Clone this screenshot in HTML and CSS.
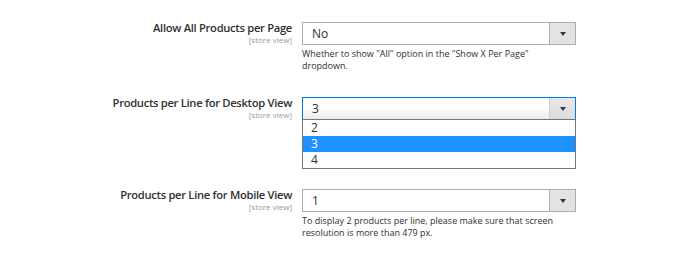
FILE: index.html
```html
<!DOCTYPE html>
<html>
<head>
<meta charset="utf-8">
<link rel="stylesheet" href="styles.css">
</head>
<body>
<div class="form">
  <div class="row">
    <div class="label">
      <div class="label-text">Allow All Products per Page</div>
      <div class="scope">[store view]</div>
    </div>
    <div class="control">
      <div class="select">
        <span class="value">No</span>
        <span class="btn"><span class="arrow"></span></span>
      </div>
      <div class="note">Whether to show "All" option in the "Show X Per Page" dropdown.</div>
    </div>
  </div>

  <div class="row row-open">
    <div class="label">
      <div class="label-text">Products per Line for Desktop View</div>
      <div class="scope">[store view]</div>
    </div>
    <div class="control">
      <div class="select select-focus">
        <span class="value">3</span>
        <span class="btn"><span class="arrow"></span></span>
      </div>
      <ul class="options">
        <li>2</li>
        <li class="selected">3</li>
        <li>4</li>
      </ul>
    </div>
  </div>

  <div class="row">
    <div class="label">
      <div class="label-text">Products per Line for Mobile View</div>
      <div class="scope">[store view]</div>
    </div>
    <div class="control">
      <div class="select">
        <span class="value">1</span>
        <span class="btn"><span class="arrow"></span></span>
      </div>
      <div class="note">To display 2 products per line, please make sure that screen resolution is more than 479 px.</div>
    </div>
  </div>
</div>
</body>
</html>
```

FILE: styles.css
```css
html, body {
  margin: 0;
  padding: 0;
  background: #ffffff;
}
body {
  font-family: "Open Sans", "Liberation Sans", sans-serif;
  color: #303030;
}
.form {
  padding-top: 22px;
}
.row {
  display: flex;
  gap: 10px;
  margin-bottom: 25px;
}
.row-open {
  margin-bottom: 69px;
}
.label {
  width: 292px;
  text-align: right;
}
.label-text {
  margin-top: -1px;
  font-size: 11.2px;
  font-weight: 600;
  letter-spacing: -0.3px;
  line-height: 13px;
  color: #303030;
}
.scope {
  margin-top: 1px;
  font-size: 8px;
  line-height: 10px;
  color: #999999;
}
.control {
  width: 274px;
  position: relative;
}
.select {
  height: 23px;
  box-sizing: border-box;
  border: 1px solid #adadad;
  background: #ffffff;
  display: flex;
  align-items: center;
}
.select-focus {
  border-color: #007bdb;
  background: linear-gradient(#ffffff 0%, #ffffff 45%, #ececec 100%);
}
.value {
  flex: 1;
  font-size: 12px;
  padding-left: 9px;
  color: #303030;
}
.btn {
  width: 25px;
  align-self: stretch;
  border-left: 1px solid #adadad;
  background: #e3e3e3;
  display: flex;
  align-items: center;
  justify-content: center;
}
.select-focus .btn {
  border-left-color: #d0d0d0;
  background: linear-gradient(#e8e8e8, #dcdcdc);
}
.arrow {
  width: 0;
  height: 0;
  border-left: 3px solid transparent;
  border-right: 3px solid transparent;
  border-top: 4px solid #41362f;
}
.note {
  width: 262px;
  margin-top: 3px;
  font-size: 9px;
  line-height: 12px;
  color: #303030;
}
.options {
  position: absolute;
  left: 0;
  top: 22px;
  width: 274px;
  box-sizing: border-box;
  margin: 0;
  padding: 0;
  list-style: none;
  border: 1px solid #767676;
  background: #ffffff;
}
.options li {
  height: 16px;
  line-height: 16px;
  font-size: 12px;
  padding-left: 8px;
  color: #303030;
}
.options li.selected {
  background: #1e90ff;
  color: #ffffff;
}
```
